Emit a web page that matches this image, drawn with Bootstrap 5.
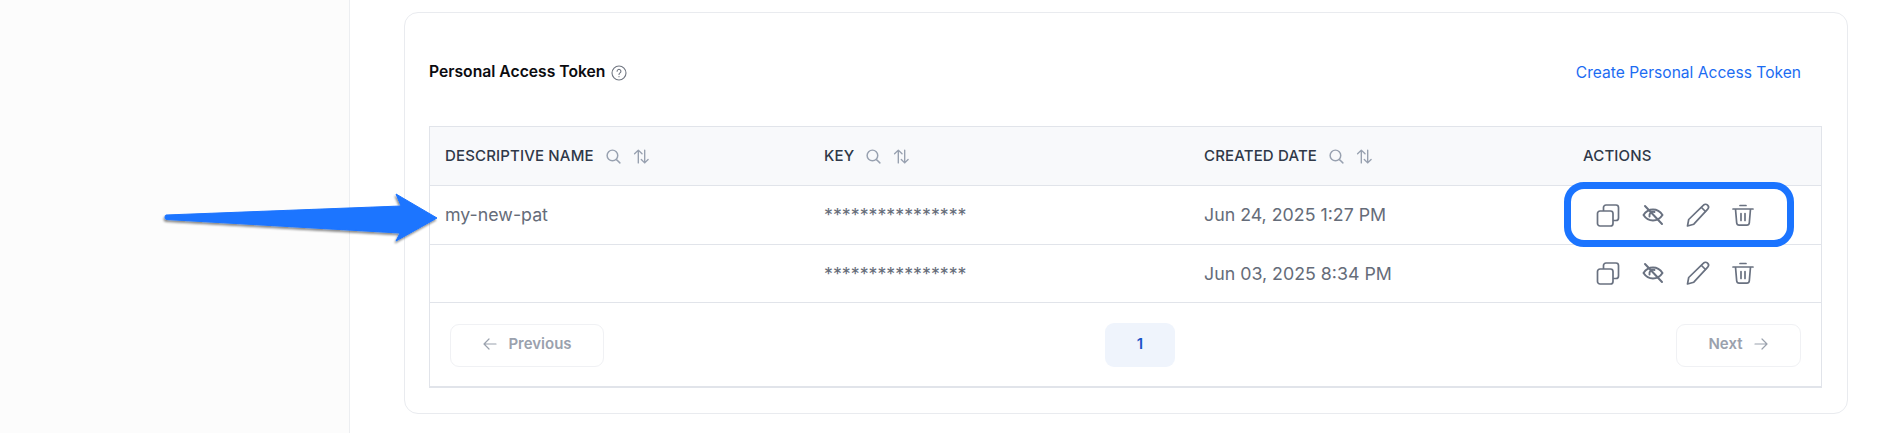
<!DOCTYPE html>
<html lang="en">
<head>
<meta charset="utf-8">
<title>Personal Access Token</title>
<link href="https://cdn.jsdelivr.net/npm/bootstrap@5.3.0/dist/css/bootstrap.min.css" rel="stylesheet">
<style>
html,body{height:100%;overflow:hidden}
body{font-family:Inter,"Noto Sans",sans-serif;background:#fff;position:relative}
.side-pane{width:350px;flex:none;background:#fcfcfc;border-right:1px solid #eceef1;height:433px}
.main-pane{flex:1;padding:12px 53px 0 54px}
.token-panel{height:402px;border:1px solid #e9ebef;border-radius:14px;padding:0 25px 0 24px;background:#fff}
.panel-head{height:113px;padding:6px 21px 0 0}
.panel-title{font-size:15.7px;font-weight:600;color:#0b0b0f;margin:0}
.help-ic{width:16px;height:16px;color:#6f7580;margin-left:6px}
.add-link{font-size:15.6px;color:#1c6cf2;text-decoration:none}
.table-shell{border:1px solid #e1e4ea;border-bottom-width:2px;height:262px}
.token-table{table-layout:fixed;margin:0;--bs-table-border-color:#e1e4ea}
.token-table th{height:58px;background:#f8f9fb;font-size:15px;font-weight:500;color:#2f3848;padding:0 15px;vertical-align:middle;letter-spacing:.15px}
.token-table td{height:59px;font-size:17.8px;color:#656c79;padding:2px 15px 0;vertical-align:middle}
.token-table tr.second td{height:58px}
.head-ic{width:17px;height:17px;color:#98a1b0;margin-left:11px}
.act-ic{width:24px;height:24px;color:#697180}
.act-row{gap:21px;padding-left:13px;margin-top:-2px}
.pager-row{padding:1px 20px 0;height:84px}
.pager-btn{font-size:15px;font-weight:600;color:#9aa1ad;border:1px solid #f0f1f4;border-radius:9px;height:43px;background:#fff;padding:0 24px 2px;gap:10px;opacity:1}
.pager-ic{width:16px;height:16px}
.prev-btn{width:154px}
.next-btn{width:125px}
.page-num{width:70px;height:44px;background:#eff4fc;color:#1c56c8;font-size:15px;font-weight:600;border:0;border-radius:9px;padding-bottom:8px}
.hl-box{position:absolute;left:1564px;top:182px;width:230px;height:65px;border:7px solid #1b74ff;border-radius:20px;pointer-events:none}
.arrow-mark{position:absolute;left:155px;top:185px;width:300px;height:70px;pointer-events:none;overflow:visible}
</style>
</head>
<body>
<div class="d-flex">
  <div class="side-pane"></div>
  <div class="main-pane">
    <div class="token-panel">
      <div class="panel-head d-flex align-items-center justify-content-between">
        <div class="d-flex align-items-center">
          <h2 class="panel-title">Personal Access Token</h2>
          <svg class="help-ic" viewBox="0 0 16 16" fill="none" stroke="currentColor" stroke-width="1.1" stroke-linecap="round"><circle cx="8" cy="8" r="7"/><path d="M6.1 6.3a1.9 1.9 0 1 1 2.9 1.6c-.6.4-1 .8-1 1.5"/><path d="M8 11.6v.1"/></svg>
        </div>
        <a class="add-link" href="#">Create Personal Access Token</a>
      </div>
      <div class="table-shell">
        <table class="table token-table">
          <colgroup><col style="width:379px"><col style="width:380px"><col style="width:379px"><col></colgroup>
          <thead>
            <tr>
              <th>DESCRIPTIVE NAME<svg class="head-ic" viewBox="0 0 16 16" fill="none" stroke="currentColor" stroke-width="1.4" stroke-linecap="round"><circle cx="7" cy="7" r="5"/><path d="M11 11l3 3"/></svg><svg class="head-ic" viewBox="0 0 16 16" fill="none" stroke="currentColor" stroke-width="1.3" stroke-linecap="round" stroke-linejoin="round"><path d="M5 14V2M1.5 5.5L5 2l3.5 3.5M11 2v12M7.8 10.8L11 14l3.2-3.2"/></svg></th>
              <th>KEY<svg class="head-ic" viewBox="0 0 16 16" fill="none" stroke="currentColor" stroke-width="1.4" stroke-linecap="round"><circle cx="7" cy="7" r="5"/><path d="M11 11l3 3"/></svg><svg class="head-ic" viewBox="0 0 16 16" fill="none" stroke="currentColor" stroke-width="1.3" stroke-linecap="round" stroke-linejoin="round"><path d="M5 14V2M1.5 5.5L5 2l3.5 3.5M11 2v12M7.8 10.8L11 14l3.2-3.2"/></svg></th>
              <th>CREATED DATE<svg class="head-ic" viewBox="0 0 16 16" fill="none" stroke="currentColor" stroke-width="1.4" stroke-linecap="round"><circle cx="7" cy="7" r="5"/><path d="M11 11l3 3"/></svg><svg class="head-ic" viewBox="0 0 16 16" fill="none" stroke="currentColor" stroke-width="1.3" stroke-linecap="round" stroke-linejoin="round"><path d="M5 14V2M1.5 5.5L5 2l3.5 3.5M11 2v12M7.8 10.8L11 14l3.2-3.2"/></svg></th>
              <th>ACTIONS</th>
            </tr>
          </thead>
          <tbody>
            <tr>
              <td>my-new-pat</td>
              <td>****************</td>
              <td>Jun 24, 2025 1:27 PM</td>
              <td><div class="d-flex act-row">
                <svg class="act-ic" viewBox="0 0 24 24" fill="none" stroke="currentColor" stroke-width="1.7" stroke-linejoin="round"><rect x="1.500" y="8" width="15.500" height="15" rx="2.5"/><path d="M7.5 8V4.5A2.5 2.5 0 0 1 10 2h10a2.500 2.500 0 0 1 2.500 2.500V15a2.500 2.500 0 0 1-2.500 2.500h-3"/></svg>
                <svg class="act-ic" viewBox="0 0 24 24" fill="none" stroke="currentColor" stroke-width="2" stroke-linecap="round" stroke-linejoin="round"><path d="M2.500 12c2-3 5.500-5.500 9.500-5.500s7.500 2.500 9.500 5.500c-2 3-5.500 5.500-9.500 5.500s-7.500-2.500-9.500-5.500z"/><path d="M8.500 13.500a3.800 3.800 0 0 1 5-4.500"/><path d="M4 3l17 18"/></svg>
                <svg class="act-ic" viewBox="0 0 24 24" fill="none" stroke="currentColor" stroke-width="1.7" stroke-linecap="round" stroke-linejoin="round"><path d="M1.500 23l1.200-6.500L17.500 2.200a2.800 2.800 0 0 1 4.200 3.900L7.800 21.200z"/><path d="M15.500 4.500l4 4"/></svg>
                <svg class="act-ic" viewBox="0 0 24 24" fill="none" stroke="currentColor" stroke-width="1.7" stroke-linecap="round" stroke-linejoin="round"><path d="M2 6h20M9 2.500h6M4.500 6l1.200 14a2.500 2.500 0 0 0 2.500 2.200h7.600a2.500 2.500 0 0 0 2.500-2.200L19.500 6M10 10.500v7M14 10.500v7"/></svg>
              </div></td>
            </tr>
            <tr class="second">
              <td></td>
              <td>****************</td>
              <td>Jun 03, 2025 8:34 PM</td>
              <td><div class="d-flex act-row">
                <svg class="act-ic" viewBox="0 0 24 24" fill="none" stroke="currentColor" stroke-width="1.7" stroke-linejoin="round"><rect x="1.500" y="8" width="15.500" height="15" rx="2.5"/><path d="M7.5 8V4.5A2.5 2.5 0 0 1 10 2h10a2.500 2.500 0 0 1 2.500 2.500V15a2.500 2.500 0 0 1-2.500 2.500h-3"/></svg>
                <svg class="act-ic" viewBox="0 0 24 24" fill="none" stroke="currentColor" stroke-width="2" stroke-linecap="round" stroke-linejoin="round"><path d="M2.500 12c2-3 5.500-5.500 9.500-5.500s7.500 2.500 9.500 5.500c-2 3-5.500 5.500-9.500 5.500s-7.500-2.500-9.500-5.500z"/><path d="M8.500 13.500a3.800 3.800 0 0 1 5-4.500"/><path d="M4 3l17 18"/></svg>
                <svg class="act-ic" viewBox="0 0 24 24" fill="none" stroke="currentColor" stroke-width="1.7" stroke-linecap="round" stroke-linejoin="round"><path d="M1.500 23l1.200-6.500L17.500 2.200a2.800 2.800 0 0 1 4.200 3.900L7.800 21.200z"/><path d="M15.500 4.500l4 4"/></svg>
                <svg class="act-ic" viewBox="0 0 24 24" fill="none" stroke="currentColor" stroke-width="1.7" stroke-linecap="round" stroke-linejoin="round"><path d="M2 6h20M9 2.500h6M4.500 6l1.200 14a2.500 2.500 0 0 0 2.500 2.200h7.600a2.500 2.500 0 0 0 2.500-2.200L19.500 6M10 10.500v7M14 10.500v7"/></svg>
              </div></td>
            </tr>
          </tbody>
        </table>
        <div class="pager-row d-flex align-items-center justify-content-between">
          <button class="btn pager-btn prev-btn d-inline-flex align-items-center justify-content-center" type="button"><svg class="pager-ic" viewBox="0 0 16 16" fill="none" stroke="currentColor" stroke-width="1.2" stroke-linecap="round" stroke-linejoin="round"><path d="M14 8H2M7 3L2 8l5 5"/></svg>Previous</button>
          <button class="btn page-num" type="button">1</button>
          <button class="btn pager-btn next-btn d-inline-flex align-items-center justify-content-center" type="button">Next<svg class="pager-ic" viewBox="0 0 16 16" fill="none" stroke="currentColor" stroke-width="1.2" stroke-linecap="round" stroke-linejoin="round"><path d="M2 8h12M9 3l5 5-5 5"/></svg></button>
        </div>
      </div>
    </div>
  </div>
</div>
<svg class="arrow-mark" viewBox="0 0 300 70" aria-hidden="true">
  <defs><filter id="arrowShade" x="-5%" y="-20%" width="110%" height="150%"><feDropShadow dx="-1" dy="2" stdDeviation="1.200" flood-color="#000" flood-opacity=".45"/></filter></defs>
  <path d="M11 30 Q10 30 10 32.500 Q10 34.500 12 34.500 L245 48 L241 56 L282 33 L241 9 L246 21 Z" fill="#1b74ff" stroke="#1b74ff" stroke-width="1" stroke-linejoin="round" filter="url(#arrowShade)"/>
</svg>
<div class="hl-box"></div>
</body>
</html>
